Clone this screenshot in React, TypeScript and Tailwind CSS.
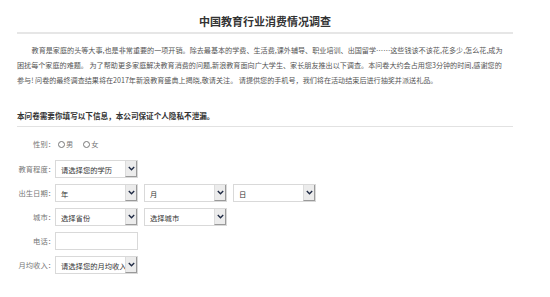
const font = { fontFamily: '"Noto Sans CJK SC", "Noto Sans", sans-serif' };

function Chevron() {
  return (
    <svg width="7" height="5" viewBox="0 0 7 5" fill="none">
      <path d="M0.8 1 L3.5 3.7 L6.2 1" stroke="#1f2a44" strokeWidth="1.4" />
    </svg>
  );
}

function FakeSelect({ text, width = "w-[83px]" }: { text: string; width?: string }) {
  return (
    <div className={`flex h-[18px] ${width} border border-[#d9d9d9] bg-white`}>
      <div className="flex-1 overflow-hidden whitespace-nowrap pl-[5px] pt-[4px] text-[7.3px] leading-[10px] text-[#333]">
        {text}
      </div>
      <div className="flex w-[12px] items-center justify-center border-b border-r border-l border-b-[#9a9a9a] border-r-[#9a9a9a] border-l-[#dcdcdc] bg-[#ececec]">
        <Chevron />
      </div>
    </div>
  );
}

function Row({ label, children }: { label: string; children: React.ReactNode }) {
  return (
    <div className="flex h-[18px] items-center">
      <div className="w-[38px] whitespace-nowrap text-right text-[7.3px] text-[#777]">{label}</div>
      <div className="flex items-center gap-[6px]">{children}</div>
    </div>
  );
}

function Radio({ label }: { label: string }) {
  return (
    <span className="flex items-center gap-[1px]">
      <span className="h-[7px] w-[7px] rounded-full border border-[#777] bg-white" />
      <span className="text-[7.3px] text-[#777]">{label}</span>
    </span>
  );
}

export default function App() {
  return (
    <div className="h-[297px] w-[550px] bg-white" style={font}>
      <div className="ml-[17px] w-[496px]">
        <h1 className="pt-[12px] text-center text-[11px] font-bold leading-[18px] text-[#333]">
          中国教育行业消费情况调查
        </h1>
        <div className="mt-[2px] h-[2px] bg-[#e6e6e6]" />

        <div className="mt-[9px] whitespace-nowrap text-[7.1px] leading-[15px] text-[#555]">
          <p className="pl-[14.6px]">
            教育是家庭的头等大事,也是非常重要的一项开销。除去最基本的学费、生活费,课外辅导、职业培训、出国留学……这些钱该不该花,花多少,怎么花,成为
          </p>
          <p>
            困扰每个家庭的难题。 为了帮助更多家庭解决教育消费的问题,新浪教育面向广大学生、家长朋友推出以下调查。本问卷大约会占用您3分钟的时间,感谢您的
          </p>
          <p>参与! 问卷的最终调查结果将在2017年新浪教育盛典上揭晓,敬请关注。 请提供您的手机号，我们将在活动结束后进行抽奖并派送礼品。</p>
        </div>

        <h2 className="mt-[20px] text-[7.6px] font-bold leading-[15px] text-[#333]">
          本问卷需要你填写以下信息，本公司保证个人隐私不泄漏。
        </h2>
        <div className="mt-[3px] h-px bg-[#e2e2e2]" />

        <div className="flex flex-col gap-[6px] pt-[8px]">
          <div className="flex h-[18px] items-center">
            <div className="w-[38px] text-right text-[7.3px] text-[#777]">性别：</div>
            <div className="flex items-center gap-[10px] pl-[3px]">
              <Radio label="男" />
              <Radio label="女" />
            </div>
          </div>
          <div className="mt-[1px]">
            <Row label="教育程度：">
              <FakeSelect text="请选择您的学历" />
            </Row>
          </div>
          <Row label="出生日期：">
            <FakeSelect text="年" />
            <FakeSelect text="月" />
            <FakeSelect text="日" />
          </Row>
          <Row label="城市：">
            <FakeSelect text="选择省份" />
            <FakeSelect text="选择城市" />
          </Row>
          <Row label="电话：">
            <input className="h-[18px] w-[83px] border border-[#d9d9d9] bg-white outline-none" />
          </Row>
          <Row label="月均收入：">
            <FakeSelect text="请选择您的月均收入" />
          </Row>
        </div>
      </div>
    </div>
  );
}
